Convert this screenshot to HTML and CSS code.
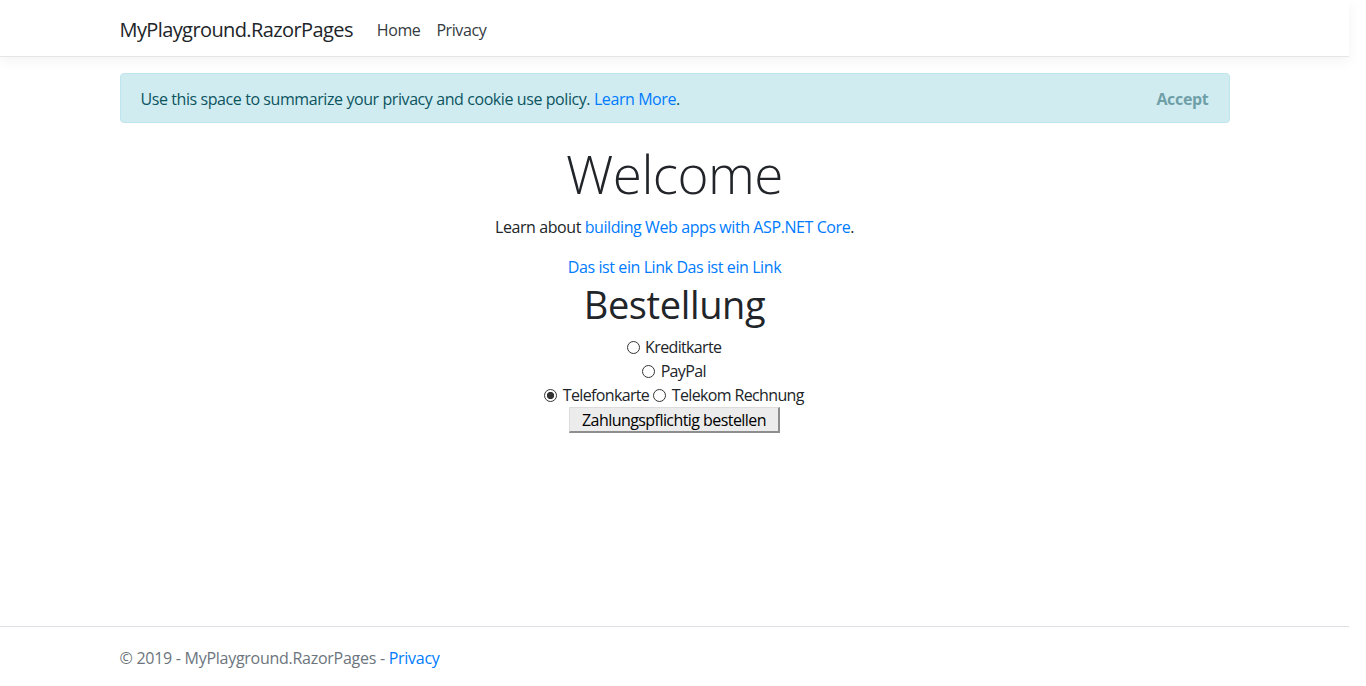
FILE: index.html
```html
<!DOCTYPE html>
<html lang="de">
<head>
<meta charset="utf-8">
<title>Home page - MyPlayground.RazorPages</title>
<link rel="stylesheet" href="styles.css">
</head>
<body>
<div class="page">
  <header class="navbar">
    <div class="container nav-inner">
      <a class="brand" href="#">MyPlayground.RazorPages</a>
      <ul class="nav-links">
        <li><a class="nav-link" href="#">Home</a></li>
        <li><a class="nav-link" href="#">Privacy</a></li>
      </ul>
    </div>
  </header>
  <div class="container content">
    <div class="alert">
      <span>Use this space to summarize your privacy and cookie use policy. <a href="#">Learn More</a>.</span>
      <button class="accept" type="button">Accept</button>
    </div>
    <main class="main">
      <h1 class="display">Welcome</h1>
      <p>Learn about <a href="#">building Web apps with ASP.NET Core</a>.</p>
      <p class="links"><a href="#">Das ist ein Link</a> <a href="#">Das ist ein Link</a></p>
      <h1 class="title">Bestellung</h1>
      <form class="order">
        <div class="row"><label><input class="radio" type="radio" name="pay"> Kreditkarte</label></div>
        <div class="row"><label><input class="radio" type="radio" name="pay"> PayPal</label></div>
        <div class="row"><label><input class="radio" type="radio" name="pay" checked> Telefonkarte</label><label><input class="radio" type="radio" name="pay"> Telekom Rechnung</label></div>
        <div class="row btn-row"><button type="button" class="submit">Zahlungspflichtig bestellen</button></div>
      </form>
    </main>
  </div>
  <footer class="footer">
    <div class="container">&copy; 2019 - MyPlayground.RazorPages - <a href="#">Privacy</a></div>
  </footer>
</div>
</body>
</html>
```
FILE: styles.css
```css
html, body {
  margin: 0;
  padding: 0;
  background: #fff;
}
body {
  font-family: "Open Sans", "Noto Sans", "Liberation Sans", sans-serif;
  font-size: 16px;
  line-height: 1.5;
  letter-spacing: -0.026em;
  color: #212529;
}
a {
  color: #007bff;
  text-decoration: none;
}
.page {
  width: 1349px;
  min-height: 686px;
  display: flex;
  flex-direction: column;
}
.container {
  width: 1110px;
  margin: 0 auto;
}
.navbar {
  background: #fff;
  border-bottom: 1px solid #e5e5e5;
  box-shadow: 0 4px 12px rgba(0, 0, 0, 0.05);
  padding: 10px 0 6px;
  margin-bottom: 16px;
}
.nav-inner {
  display: flex;
  align-items: center;
}
.brand {
  color: #212529;
  font-size: 20px;
  line-height: 30px;
  letter-spacing: -0.03em;
  padding: 5px 0;
  margin-right: 16px;
}
.nav-links {
  display: flex;
  list-style: none;
  margin: 0;
  padding: 0;
}
.nav-link {
  display: block;
  color: #343a40;
  padding: 8px;
  line-height: 24px;
}
.alert {
  display: flex;
  justify-content: space-between;
  align-items: center;
  background: #d1ecf1;
  border: 1px solid #bee5eb;
  border-radius: 4px;
  color: #0c5460;
  padding: 13px 20px 11px;
  margin-bottom: 17px;
}
.accept {
  background: transparent;
  border: 0;
  padding: 0;
  font: inherit;
  font-weight: 700;
  letter-spacing: -0.02em;
  color: #0c5460;
  opacity: 0.5;
  cursor: pointer;
}
.main {
  text-align: center;
  padding-bottom: 16px;
}
.display {
  font-size: 53px;
  font-weight: 300;
  line-height: 67px;
  letter-spacing: -0.01em;
  margin: 0 0 8px;
}
.main p {
  margin: 0 0 16px;
}
.main p.links {
  margin: 0;
}
.title {
  font-size: 38px;
  font-weight: 500;
  line-height: 48px;
  letter-spacing: -0.01em;
  margin: 1px 0 7px;
}
.order {
  margin: 0;
}
.row {
  height: 24px;
  line-height: 24px;
  padding-right: 5px;
}
.btn-row {
  padding-right: 0;
}
.row label {
  letter-spacing: -0.04em;
}
.radio {
  appearance: none;
  -webkit-appearance: none;
  display: inline-block;
  width: 13px;
  height: 13px;
  box-sizing: border-box;
  border: 1px solid #333;
  border-radius: 50%;
  background: #fff;
  margin: 0 2px 0 4px;
  vertical-align: -1px;
}
.radio:checked {
  background: radial-gradient(circle, #333 0, #333 3.3px, #fff 4px);
}
.submit {
  font: inherit;
  letter-spacing: -0.035em;
  line-height: 22px;
  color: #000;
  background: #ececec;
  border-style: solid;
  border-width: 1px 2px 2px 1px;
  border-color: #dcdcdc #8e8e8e #8e8e8e #dcdcdc;
  padding: 1px 12px 0;
  margin-top: 0;
}
.footer {
  margin-top: auto;
  border-top: 1px solid #dee2e6;
  color: #6c757d;
  padding-top: 3px;
  line-height: 56px;
  letter-spacing: -0.017em;
  white-space: nowrap;
}
```
